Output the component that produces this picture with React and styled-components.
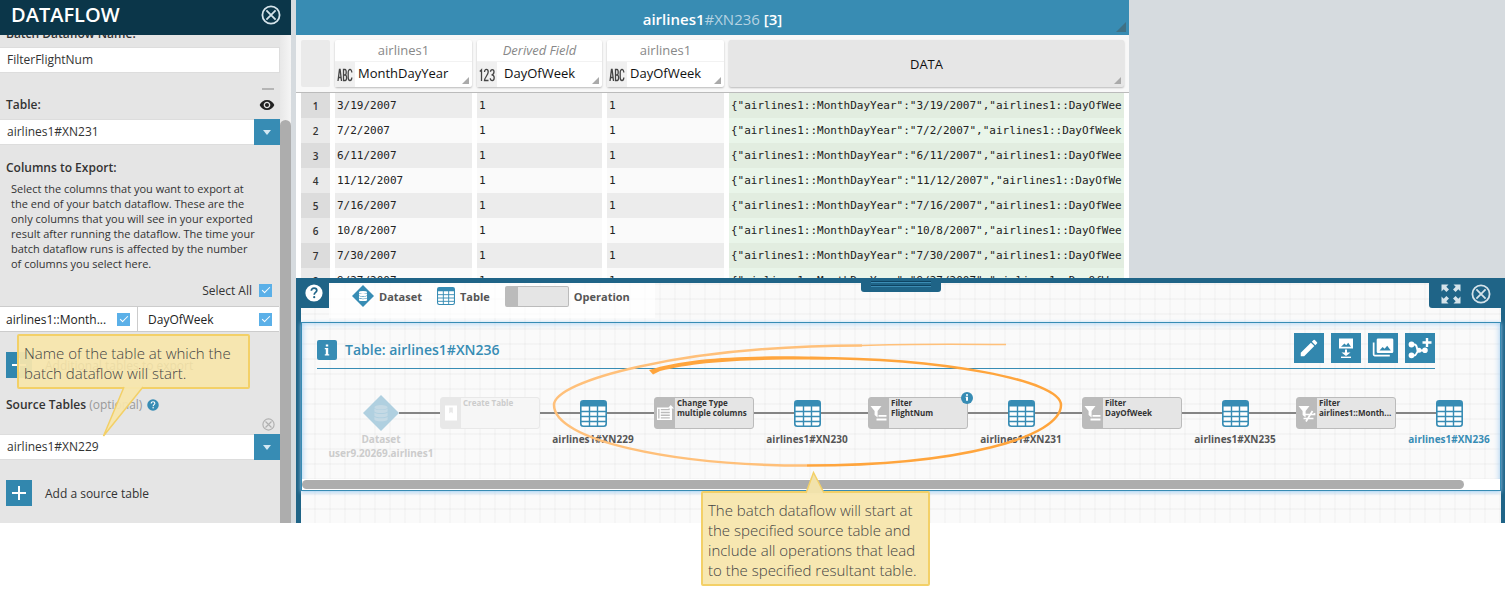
import React from "react";
import styled, { createGlobalStyle } from "styled-components";
import { MdEdit, MdVisibility } from "react-icons/md";

const color = {
  navy: "#0b3649",
  blue: "#378cb4",
  deep: "#1f6487",
  side: "#e5e5e5",
  text: "#333",
  muted: "#aaa",
  check: "#5bb0e8",
};

const GlobalStyle = createGlobalStyle`
  *, *::before, *::after { box-sizing: border-box; }
  body { margin: 0; background: #fff; color: ${color.text}; font-family: "Open Sans", sans-serif; font-size: 13px; }
  button, input, select { font: inherit; color: inherit; margin: 0; }
  button { border: 0; padding: 0; cursor: pointer; }
  svg { display: block; flex: none; }
`;

const Page = styled.div`
  position: relative;
  min-height: 100vh;
`;

const Workspace = styled.div`
  display: flex;
  background: #d6dbdf;
`;

/* ---------- sidebar ---------- */

const Sidebar = styled.aside`
  flex: none;
  width: 291px;
  margin-right: 5px;
  display: flex;
  flex-direction: column;
  background: ${color.side};
`;

const SideHeader = styled.header`
  display: flex;
  align-items: center;
  justify-content: space-between;
  height: 35px;
  padding: 0 10px 5px 11px;
  background: ${color.navy};
  color: #fff;
`;

const SideTitle = styled.h1`
  margin: 0;
  font-size: 20px;
  line-height: 30px;
  font-weight: 600;
`;

const IconButton = styled.button`
  display: flex;
  align-items: center;
  justify-content: center;
  background: none;
  color: ${(p) => p.$color || "#d5e3ea"};
`;

const SideBody = styled.div`
  flex: 1;
  display: flex;
  overflow: hidden;
`;

const SideForm = styled.form`
  flex: 1;
  min-width: 0;
  display: flex;
  flex-direction: column;
  margin-top: -11px;
`;

const SideScroll = styled.div`
  width: 11px;
  padding-top: 85px;
  display: flex;
  background: linear-gradient(90deg, #e8e8e8, #f5f5f5);
`;

const SideThumb = styled.div`
  flex: 1;
  border-radius: 6px 6px 0 0;
  background: #adadad;
`;

const Label = styled.label`
  font-size: 12px;
  line-height: 20px;
  font-weight: 600;
  padding-left: 6px;
`;

const FieldHead = styled.div`
  display: flex;
  align-items: center;
  justify-content: space-between;
  height: 20px;
  padding-right: 5px;
  margin-top: 5px;
`;

const TextBox = styled.input`
  width: 280px;
  height: 26px;
  margin-top: 3px;
  padding: 0 7px 2px;
  border: 1px solid #ddd;
  border-left: 0;
  background: #fff;
  font-size: 12px;
  font-weight: 500;
`;

const Collapse = styled.button`
  align-self: flex-end;
  width: 12px;
  height: 2px;
  margin: 15px 6px 0 0;
  background: #b5b5b5;
`;

const SelectWrap = styled.div`
  display: flex;
  height: 26px;
  position: relative;
  margin-top: ${(p) => p.$top || 0}px;
`;

const Select = styled.select`
  flex: 1;
  appearance: none;
  padding: 0 34px 2px 7px;
  border: 1px solid #ddd;
  border-width: 1px 0;
  border-radius: 0;
  background: #fff;
  font-size: 12px;
  font-weight: 500;
`;

const SelectArrow = styled.span`
  position: absolute;
  right: 0;
  top: 0;
  bottom: 0;
  width: 26px;
  display: flex;
  align-items: center;
  justify-content: center;
  background: ${color.blue};
  pointer-events: none;
`;

const SectionTitle = styled.h2`
  margin: ${(p) => p.$top}px 0 0;
  padding-left: 6px;
  display: flex;
  align-items: center;
  gap: 5px;
  font-size: 12px;
  line-height: 20px;
  font-weight: 600;
`;

const Optional = styled.span`
  font-weight: 500;
  color: #999;
`;

const Hint = styled.p`
  margin: 3px 0 0;
  padding: 0 8px 0 11px;
  font-size: 11px;
  line-height: 15px;
  font-weight: 500;
`;

const SelectAll = styled.label`
  display: flex;
  align-items: center;
  justify-content: flex-end;
  gap: 7px;
  height: 20px;
  margin-top: 9px;
  padding-right: 8px;
  font-size: 12px;
  font-weight: 500;
`;

const Check = styled.input`
  appearance: none;
  flex: none;
  width: 13px;
  height: 13px;
  background: ${color.check};
  display: grid;
  place-items: center;
  &:checked::before {
    content: "";
    width: 8px;
    height: 4px;
    margin-top: -2px;
    border: solid #fff;
    border-width: 0 0 1px 1px;
    transform: rotate(-45deg);
  }
`;

const ColumnRow = styled.div`
  display: grid;
  grid-template-columns: 137px 1fr;
  gap: 1px;
  height: 26px;
  margin-top: 6px;
  margin-right: 1px;
  border: solid #ccc;
  border-width: 1px 0;
  background: #ccc;
`;

const ColumnPick = styled.label`
  display: flex;
  align-items: center;
  justify-content: space-between;
  padding: 0 7px 0 ${(p) => p.$indent}px;
  background: #fff;
  color: #222;
  font-size: 12px;
  font-weight: 500;
`;

const AddRow = styled.div`
  display: flex;
  align-items: center;
  gap: 13px;
  height: 26px;
  margin-top: ${(p) => p.$top}px;
  margin-bottom: ${(p) => p.$bottom || 0}px;
  padding-left: 6px;
  font-size: 12px;
  font-weight: 500;
`;

const SquareButton = styled.button`
  display: flex;
  align-items: center;
  justify-content: center;
  width: ${(p) => p.$size}px;
  height: ${(p) => p.$size}px;
  background: #3287ae;
  color: #fff;
`;

const ClearRow = styled.div`
  display: flex;
  justify-content: flex-end;
  height: 14px;
  margin-top: 2px;
  padding-right: 5px;
`;

/* ---------- worksheet ---------- */

const Main = styled.main`
  flex: 1;
  min-width: 0;
  display: flex;
  flex-direction: column;
`;

const Sheet = styled.section`
  align-self: flex-start;
  height: 278px;
  overflow: hidden;
  background: #fff;
`;

const SheetHeader = styled.header`
  position: relative;
  height: 35px;
  display: flex;
  align-items: center;
  justify-content: center;
  padding-top: 2px;
  background: #388cb3;
  color: #fff;
  font-size: 15px;
  font-weight: 600;
`;

const SheetId = styled.span`
  font-weight: 400;
  color: #b5d3e2;
`;

const Corner = styled.i`
  position: absolute;
  right: 3px;
  bottom: 3px;
  width: ${(p) => p.$size}px;
  height: ${(p) => p.$size}px;
  clip-path: polygon(100% 0, 100% 100%, 0 100%);
  background: ${(p) => p.$fill};
`;

const Grid = styled.table`
  width: 833px;
  table-layout: fixed;
  border-spacing: 5px 0;
  background: linear-gradient(#f8f8f8 57px, #bbb 57px, #bbb 58px, #fff 58px);
`;

const HeadCell = styled.th`
  height: 58px;
  width: ${(p) => p.$width}px;
  padding: 0;
  padding-bottom: 1px;
  font-weight: 400;
`;

const HeadBox = styled.div`
  position: relative;
  height: 47px;
  display: flex;
  flex-direction: column;
  justify-content: ${(p) => (p.$center ? "center" : "flex-start")};
  background: ${(p) => p.$fill || "#fff"};
  border-radius: 2px;
  box-shadow: ${(p) => (p.$flat ? "none" : "0 1px 2px rgba(0,0,0,.25)")};
  color: #111;
  font-size: 13px;
  font-weight: 500;
`;

const Prefix = styled.span`
  height: 21px;
  line-height: 20px;
  color: #888;
  font-size: 13px;
  font-style: ${(p) => (p.$derived ? "italic" : "normal")};
`;

const FieldName = styled.span`
  display: flex;
  align-items: center;
  height: 26px;
  border-top: 1px solid #f2f2f2;
`;

const TypeBadge = styled.span`
  width: 20px;
  align-self: stretch;
  display: flex;
  align-items: center;
  justify-content: center;
  background: #f0f0f0;
`;

const NameText = styled.span`
  padding-left: ${(p) => p.$pad}px;
  padding-bottom: 4px;
`;

const BodyRow = styled.tr`
  height: 25px;
  background: ${(p) => (p.$odd ? "#ececec" : "#fafafa")};
`;

const Cell = styled.td`
  height: 25px;
  padding: 0 2px;
  overflow: hidden;
  white-space: nowrap;
  font-family: "DejaVu Sans Mono", monospace;
  font-size: 11px;
  line-height: 25px;
  color: #222;
`;

const JsonCell = styled(Cell)`
  background: ${(p) => (p.$odd ? "#e2ede0" : "#e9f5e9")};
`;

const JsonText = styled.div`
  overflow: hidden;
`;

const RowNumber = styled.th`
  padding: 0;
  background: ${(p) => (p.$odd ? "#dcdcdc" : "#eaeaea")};
  font-size: 10px;
  font-weight: 600;
`;

/* ---------- dataflow panel ---------- */

const Panel = styled.section`
  position: relative;
  flex: 1;
  border: 5px solid ${color.deep};
  border-right-width: 4px;
  border-bottom: 0;
  padding-bottom: 32px;
  background:
    repeating-linear-gradient(0deg, transparent 0 13px, rgba(0,0,0,.025) 13px 15px),
    repeating-linear-gradient(90deg, transparent 0 13px, rgba(0,0,0,.02) 13px 15px),
    #fafafa;
`;

const Handle = styled.div`
  position: absolute;
  top: -5px;
  left: 560px;
  width: 80px;
  height: 14px;
  padding: 3px 10px;
  border-radius: 0 0 3px 3px;
  background: ${color.deep};
`;

const HandleGrip = styled.div`
  height: 6px;
  background: repeating-linear-gradient(#0e4463 0 1px, #3b8cb4 1px 2px, transparent 2px 4px);
`;

const PanelTop = styled.div`
  display: flex;
  justify-content: space-between;
  align-items: flex-start;
  height: 39px;
`;

const HelpTab = styled.div`
  width: 28px;
  height: 25px;
  padding: 1px 0 0 4px;
  background: ${color.deep};
`;

const Legend = styled.ul`
  list-style: none;
  margin: 0 auto 0 0;
  padding: 0 25px 9px 23px;
  display: flex;
  align-items: center;
  gap: 15px;
  height: 35px;
  background: rgba(255, 255, 255, .7);
  font-size: 11px;
  font-weight: 700;
  color: #555;
`;

const LegendItem = styled.li`
  display: flex;
  align-items: center;
  gap: 5px;
`;

const OpSwatch = styled.span`
  width: 64px;
  height: 21px;
  border: 1px solid #bbb;
  border-left: 13px solid #bbb;
  border-radius: 2px;
  background: #e5e5e5;
`;

const WindowTab = styled.div`
  display: flex;
  align-items: center;
  gap: 10px;
  width: 72px;
  height: 25px;
  padding: 0 6px 3px 12px;
  border-radius: 0 0 0 3px;
  background: ${color.deep};
`;

const Flow = styled.article`
  display: flex;
  flex-direction: column;
  height: 169px;
  border: 1px solid ${color.blue};
  box-shadow: inset 0 0 6px #9ccbf2, 0 1px 4px #9ccbf2;
  overflow: hidden;
`;

const FlowHeader = styled.header`
  display: flex;
  align-items: center;
  gap: 8px;
  height: 46px;
  margin: 0 65px 0 15px;
  padding-top: 8px;
  border-bottom: 1px solid ${color.blue};
`;

const InfoBox = styled.span`
  width: 20px;
  height: 20px;
  display: flex;
  align-items: center;
  justify-content: center;
  border-radius: 2px;
  background: ${color.blue};
`;

const FlowTitle = styled.h2`
  margin: 0 auto 0 0;
  font-size: 14px;
  font-weight: 600;
  color: ${color.blue};
`;

const Tools = styled.div`
  display: flex;
  gap: 7px;
  padding-bottom: 4px;
`;

const Chain = styled.div`
  display: flex;
  align-items: center;
  height: 88px;
  padding-left: 61px;
`;

const Line = styled.span`
  flex: none;
  width: ${(p) => p.$width}px;
  height: 2px;
  background: #858585;
`;

const Node = styled.div`
  position: relative;
  flex: none;
  width: ${(p) => p.$width}px;
  display: flex;
  justify-content: center;
`;

const NodeLabel = styled.span`
  position: absolute;
  top: ${(p) => p.$top}px;
  width: 120px;
  text-align: center;
  font-size: 10px;
  line-height: 14px;
  font-weight: 700;
  color: ${(p) => p.$color || "#555"};
`;

const OpNode = styled.div`
  position: relative;
  flex: none;
  display: flex;
  width: 100px;
  height: 32px;
  border: 1px solid #bbb;
  border-radius: 3px;
  background: #e5e5e5;
  color: ${(p) => (p.$faded ? "#ccc" : "#333")};
  ${(p) => p.$faded && "background: #f6f6f6; border-color: #e8e8e8;"}
`;

const OpIcon = styled.span`
  flex: none;
  width: 20px;
  display: flex;
  align-items: center;
  justify-content: center;
  background: ${(p) => (p.$faded ? "#e8e8e8" : "#bbb")};
`;

const OpText = styled.span`
  padding-left: 2px;
  font-size: 8px;
  line-height: 10px;
  font-weight: 700;
  white-space: pre-line;
`;

const InfoDot = styled.span`
  position: absolute;
  top: -6px;
  right: -6px;
`;

const FlowScroll = styled.div`
  height: 11px;
  margin-top: auto;
  padding: 1px 36px 1px 0;
  background: #fff;
`;

const FlowThumb = styled.div`
  height: 9px;
  border-radius: 5px;
  background: #adadad;
`;

/* ---------- annotations ---------- */

const Overlay = styled.svg`
  position: absolute;
  left: ${(p) => p.$x}px;
  top: ${(p) => p.$y}px;
  pointer-events: none;
`;

const Callout = styled.aside`
  position: absolute;
  left: ${(p) => p.$x}px;
  top: ${(p) => p.$y}px;
  width: ${(p) => p.$width}px;
  padding: 7px 5px 4px;
  border: 2px solid #f3d067;
  border-radius: 2px;
  background: rgba(246, 229, 172, .94);
  background-clip: padding-box;
  font-size: 15px;
  line-height: 20px;
  font-weight: 300;
  white-space: nowrap;
  color: #444;
`;

/* ---------- icons ---------- */

const CircleX = ({ size = 20 }) => (
  <svg width={size} height={size} viewBox="0 0 20 20" fill="none" stroke="currentColor" strokeWidth="1.8">
    <circle cx="10" cy="10" r="8.6" />
    <path d="M5.4 5.4l9.2 9.2M14.6 5.4l-9.2 9.2" />
  </svg>
);

const Plus = () => (
  <svg width="16" height="16" viewBox="0 0 16 16" stroke="#fff" strokeWidth="2">
    <path d="M8 1v14M1 8h14" />
  </svg>
);

const Help = ({ size, bg, fg }) => (
  <svg width={size} height={size} viewBox="0 0 18 18" fill="none">
    <circle cx="9" cy="9" r="8.6" fill={bg} />
    <path d="M6.3 6.8c0-1.7 1.2-2.7 2.8-2.7s2.7 1 2.7 2.4c0 1.9-2.6 2-2.6 4.2" stroke={fg} strokeWidth="1.7" />
    <circle cx="9.2" cy="13.2" r="1.1" fill={fg} />
  </svg>
);

const InfoGlyph = () => (
  <svg width="6" height="12" viewBox="0 0 6 12" fill="#fff">
    <path d="M1.800.5h2.400v2H1.800zM.8 4h3.400v6.300h1v1.200H.8v-1.200h1V5.200h-1z" />
  </svg>
);

const TableIcon = ({ size = 27 }) => (
  <svg width={size} height={size} viewBox="0 0 27 27">
    <rect x=".8" y=".8" width="25.4" height="25.4" rx="2.5" fill="#fff" stroke="#378cb4" strokeWidth="1.6" />
    <path d="M1 3a2 2 0 012-2h21a2 2 0 012 2v3.500H1z" fill="#378cb4" />
    <path d="M9.500 6v20M17.500 6v20M1 11.500h25M1 16.500h25M1 21.500h25" stroke="#378cb4" strokeWidth="1.400" />
  </svg>
);

const DatasetIcon = ({ size, faded }) => (
  <svg width={size} height={size} viewBox="0 0 36 36">
    <path d="M18 0l18 18-18 18L0 18z" fill={faded ? "#b0d0e0" : "#378cb4"} />
    <g fill={faded ? "#c5dae5" : "#fff"}>
      <ellipse cx="18" cy="12.300" rx="6.600" ry="2.300" />
      <path d="M11.400 13.400c2 2 11.200 2 13.200 0v3.200c-2 2-11.200 2-13.200 0z" />
      <path d="M11.400 17.600c2 2 11.200 2 13.200 0v3.200c-2 2-11.200 2-13.200 0z" />
      <path d="M11.400 21.800c2 2 11.200 2 13.200 0v3c-2 2-11.200 2-13.200 0z" />
    </g>
  </svg>
);

const TypeIcon = ({ kind }) => (
  <svg width="16" height="14" viewBox="0 0 16 14" fill="none" stroke="#444" strokeWidth="1.300">
    {kind === "ABC" ? (
      <path d="M1 13L2.500 1.500h.6L4.500 13M1.600 9.500h2.400M6.500 1.500v11h1.700c1.800 0 1.800-5.500 0-5.500H6.500h1.500c1.600 0 1.600-5.500 0-5.500zM14.800 4.500c0-4-3.600-4-3.600 0v5c0 4 3.600 4 3.600 0" />
    ) : (
      <path d="M.8 3.500l1.700-1.700V13M5.500 4c0-3.500 3.700-3.500 3.700 0 0 3-3.700 5.500-3.700 8.500h4M11.500 3.800c0-3 3.500-3 3.500 0 0 2-1 3-2.500 3 1.700 0 2.700 1 2.700 3 0 3.600-3.900 3.600-3.900.4" />
    )}
  </svg>
);

const ExpandIcon = () => (
  <svg width="20" height="20" viewBox="0 0 20 20" fill="#d5e3ea">
    <path id="arrow" d="M.5.5h7L5.300 2.700 8 5.400 5.400 8 2.700 5.300.5 7.500z" />
    <use href="#arrow" transform="rotate(90 10 10)" />
    <use href="#arrow" transform="rotate(180 10 10)" />
    <use href="#arrow" transform="rotate(270 10 10)" />
  </svg>
);

const ExportImage = () => (
  <svg width="20" height="22" viewBox="0 0 20 22" fill="#fff">
    <path fillRule="evenodd" d="M3 1.500h14v10H3zM5 9.800h10l-2.800-4-2 2.500-1.700-1.700z" />
    <path d="M9 12.500h2v3h3.500L10 19l-4.500-3.500H9z" />
    <path d="M5 19.600h10V21H5z" />
  </svg>
);

const Images = () => (
  <svg width="22" height="20" viewBox="0 0 22 20" fill="#fff">
    <path fillRule="evenodd" d="M6 .5h14a1.300 1.300 0 011.300 1.300v12A1.300 1.300 0 0120 15H6a1.300 1.300 0 01-1.300-1.300v-12A1.300 1.300 0 016 .5zM7.500 12.500h11.300l-3.600-4.700-2.600 3-2-1.700z" />
    <path d="M.8 4.500h1.700v12.200h15.300v1.700H2.600A1.800 1.800 0 01.8 16.600z" />
  </svg>
);

const MergePlus = () => (
  <svg width="24" height="22" viewBox="0 0 24 22" fill="none" stroke="#fff" strokeWidth="2">
    <path d="M4 7.500h2.500c3.500 0 1 6 5 6h6M4 18.500h2c3.500 0 2-5 5.500-5" />
    <circle cx="3.500" cy="7.500" r="1.900" fill="#fff" />
    <circle cx="3.500" cy="18.300" r="1.900" fill="#fff" />
    <circle cx="11" cy="13.300" r="1.500" fill="#fff" />
    <circle cx="17" cy="13.300" r="1.800" fill="#fff" />
    <path d="M19 1v9M14.500 5.500h9" strokeWidth="2.400" />
  </svg>
);

const OpGlyph = ({ kind }) => (
  <svg width="18" height="18" viewBox="0 0 18 18" fill="#fff">
    {kind === "create" && (
      <path fillRule="evenodd" d="M3 1.500h12v15H3zM7.200 3.500v6L9 8l1.800 1.500v-6z" />
    )}
    {kind === "type" && (
      <>
        <path fillRule="evenodd" d="M1 3.500h11.500V5H4.800v1.300h9V5.500h2.200V16H1zM4.800 7.800v1.500h9V7.800zM4.800 10.600v1.300h9v-1.300zM4.800 13.200v1.400h9v-1.400zM2.200 5v9.600h1.300V5z" />
        <path d="M14.800 1l3.200 3.500h-2.200V7h-2V4.500h-2.200z" />
      </>
    )}
    {(kind === "filter" || kind === "filterNot") && <path d="M.5 2h11L7.600 7v6.500L4.600 11V7z" />}
    {kind === "filter" && <path d="M8.500 11h8v1.800h-8zM6.500 14.600h10v1.800h-10z" />}
    {kind === "filterNot" && (
      <path d="M7 10.500h9.500v-1.500M5.500 14.500h10M14.500 7L8 17.500" stroke="#fff" strokeWidth="1.700" fill="none" />
    )}
  </svg>
);

/* ---------- data ---------- */

const columns = [
  { prefix: "airlines1", name: "MonthDayYear", kind: "ABC", width: 137, pad: 3 },
  { prefix: "Derived Field", name: "DayOfWeek", kind: "123", width: 125, pad: 7, derived: true },
  { prefix: "airlines1", name: "DayOfWeek", kind: "ABC", width: 117, pad: 3 },
];

const dates = ["3/19/2007", "7/2/2007", "6/11/2007", "11/12/2007", "7/16/2007", "10/8/2007", "7/30/2007", "9/27/2007"];

const steps = [
  { op: "Create Table", kind: "create", faded: true, table: "airlines1#XN229" },
  { op: "Change Type\nmultiple columns", kind: "type", table: "airlines1#XN230" },
  { op: "Filter\nFlightNum", kind: "filter", info: true, table: "airlines1#XN231" },
  { op: "Filter\nDayOfWeek", kind: "filter", table: "airlines1#XN235" },
  { op: "Filter\nairlines1::Month...", kind: "filterNot", table: "airlines1#XN236", current: true },
];

function TableSelect({ id, value, top, label }) {
  return (
    <SelectWrap $top={top}>
      <Select id={id} defaultValue={value} aria-label={label}>
        <option>{value}</option>
      </Select>
      <SelectArrow>
        <svg width="8" height="5" viewBox="0 0 8 5"><path d="M0 0h8L4 5z" fill="#d3e8f3" /></svg>
      </SelectArrow>
    </SelectWrap>
  );
}

function DataflowSidebar() {
  return (
    <Sidebar>
      <SideHeader>
        <SideTitle>DATAFLOW</SideTitle>
        <IconButton aria-label="Close dataflow"><CircleX /></IconButton>
      </SideHeader>
      <SideBody>
        <SideForm>
          <Label htmlFor="flow-name">Batch Dataflow Name:</Label>
          <TextBox id="flow-name" defaultValue="FilterFlightNum" />
          <Collapse type="button" aria-label="Collapse" />
          <FieldHead>
            <Label htmlFor="result-table">Table:</Label>
            <IconButton type="button" $color="#222" aria-label="Show table"><MdVisibility size={16} /></IconButton>
          </FieldHead>
          <TableSelect id="result-table" value="airlines1#XN231" top={4} />
          <SectionTitle $top={13}>Columns to Export:</SectionTitle>
          <Hint>
            Select the columns that you want to export at<br />
            the end of your batch dataflow. These are the<br />
            only columns that you will see in your exported<br />
            result after running the dataflow. The time your<br />
            batch dataflow runs is affected by the number<br />
            of columns you select here.
          </Hint>
          <SelectAll>Select All<Check type="checkbox" defaultChecked /></SelectAll>
          <ColumnRow>
            <ColumnPick $indent={6}>airlines1::Month...<Check type="checkbox" defaultChecked /></ColumnPick>
            <ColumnPick $indent={10}>DayOfWeek<Check type="checkbox" defaultChecked /></ColumnPick>
          </ColumnRow>
          <AddRow $top={20}>
            <SquareButton type="button" $size={26} aria-label="Add export table"><Plus /></SquareButton>
            Additional tables to export
          </AddRow>
          <SectionTitle $top={17}>
            <span>Source Tables <Optional>(optional)</Optional></span>
            <Help size={12} bg={color.blue} fg="#fff" />
          </SectionTitle>
          <ClearRow>
            <IconButton type="button" $color="#b0b0b0" aria-label="Remove source table"><CircleX size={13} /></IconButton>
          </ClearRow>
          <TableSelect id="source-table" value="airlines1#XN229" top={3} label="Source table" />
          <AddRow $top={20} $bottom={17}>
            <SquareButton type="button" $size={26} aria-label="Add source"><Plus /></SquareButton>
            Add a source table
          </AddRow>
        </SideForm>
        <SideScroll><SideThumb /></SideScroll>
      </SideBody>
    </Sidebar>
  );
}

function Worksheet() {
  return (
    <Sheet>
      <SheetHeader>
        <span>airlines1<SheetId>#XN236</SheetId> [3]</span>
        <Corner $size={10} $fill="#3f7185" />
      </SheetHeader>
      <Grid>
        <thead>
          <tr>
            <HeadCell $width={29}><HeadBox $fill="#eaeaea" $flat /></HeadCell>
            {columns.map((c, i) => (
              <HeadCell key={i} $width={c.width}>
                <HeadBox>
                  <Prefix $derived={c.derived}>{c.prefix}</Prefix>
                  <FieldName>
                    <TypeBadge><TypeIcon kind={c.kind} /></TypeBadge>
                    <NameText $pad={c.pad}>{c.name}</NameText>
                  </FieldName>
                  <Corner $size={7} $fill="#aaa" />
                </HeadBox>
              </HeadCell>
            ))}
            <HeadCell $width={395}>
              <HeadBox $fill="#e6e6e6" $center>DATA<Corner $size={7} $fill="#aaa" /></HeadBox>
            </HeadCell>
          </tr>
        </thead>
        <tbody>
          {dates.map((d, i) => {
            const odd = i % 2 === 0;
            return (
              <BodyRow key={d} $odd={odd}>
                <RowNumber $odd={odd}>{i + 1}</RowNumber>
                <Cell>{d}</Cell>
                <Cell>1</Cell>
                <Cell>1</Cell>
                <JsonCell $odd={odd}>
                  <JsonText>{`{"airlines1::MonthDayYear":"${d}","airlines1::DayOfWeek":"1"}`}</JsonText>
                </JsonCell>
              </BodyRow>
            );
          })}
        </tbody>
      </Grid>
    </Sheet>
  );
}

function FlowPanel() {
  return (
    <Panel>
      <PanelTop>
        <HelpTab><Help size={18} bg="#fff" fg={color.deep} /></HelpTab>
        <Legend>
          <LegendItem><DatasetIcon size={22} />Dataset</LegendItem>
          <LegendItem><TableIcon size={18} />Table</LegendItem>
          <LegendItem><OpSwatch />Operation</LegendItem>
        </Legend>
        <WindowTab>
          <IconButton aria-label="Full screen"><ExpandIcon /></IconButton>
          <IconButton aria-label="Close panel"><CircleX /></IconButton>
        </WindowTab>
      </PanelTop>
      <Flow>
        <FlowHeader>
          <InfoBox><InfoGlyph /></InfoBox>
          <FlowTitle>Table: airlines1#XN236</FlowTitle>
          <Tools>
            <SquareButton $size={30} aria-label="Edit"><MdEdit size={22} /></SquareButton>
            <SquareButton $size={30} aria-label="Save image"><ExportImage /></SquareButton>
            <SquareButton $size={30} aria-label="Open images"><Images /></SquareButton>
            <SquareButton $size={30} aria-label="Create dataflow"><MergePlus /></SquareButton>
          </Tools>
        </FlowHeader>
        <Chain>
          <Node $width={36}>
            <DatasetIcon size={36} faded />
            <NodeLabel $top={37} $color="#ccc">Dataset<br />user9.20269.airlines1</NodeLabel>
          </Node>
          {steps.map((s, i) => (
            <React.Fragment key={s.table}>
              <Line $width={i ? 48 : 41} />
              <OpNode $faded={s.faded}>
                <OpIcon $faded={s.faded}><OpGlyph kind={s.kind} /></OpIcon>
                <OpText>{s.op}</OpText>
                {s.info && (
                  <InfoDot>
                    <svg width="12" height="12" viewBox="0 0 12 12">
                      <circle cx="6" cy="6" r="6" fill="#378cb4" />
                      <path d="M5 2.300h2v1.400H5zM4.600 4.800H7v4h-2v-3h-.4z" fill="#fff" />
                    </svg>
                  </InfoDot>
                )}
              </OpNode>
              <Line $width={40} />
              <Node $width={26}>
                <TableIcon />
                <NodeLabel $top={32} $color={s.current ? color.blue : undefined}>{s.table}</NodeLabel>
              </Node>
            </React.Fragment>
          ))}
        </Chain>
        <FlowScroll><FlowThumb /></FlowScroll>
      </Flow>
      <Handle><HandleGrip /></Handle>
    </Panel>
  );
}

export default function App() {
  return (
    <>
      <GlobalStyle />
      <Page>
        <Workspace>
          <DataflowSidebar />
          <Main>
            <Worksheet />
            <FlowPanel />
          </Main>
        </Workspace>

        <Overlay $x={550} $y={340} width="520" height="130" viewBox="550 340 520 130" fill="none">
          <path d="M1006 344.500C950 344 900 344 862 345.500" stroke="#ffc07a" strokeWidth="1.500" />
          <path d="M862 345.500C680 346 554 381 554 405C554 440 670 465.500 807 465.500" stroke="#ffc07a" strokeWidth="2.500" />
          <path d="M807 465.500C960 465.500 1061 437 1061 405C1061 380 940 358 810 358" stroke="#ffa53d" strokeWidth="2.500" />
          <path d="M649 370C690 357 750 355 830 357V359.500C750 359 700 361 660 371L653 374.500Z" fill="#ffa53d" />
        </Overlay>

        <Callout $x={17} $y={334} $width={233}>
          Name of the table at which the<br />batch dataflow will start.
        </Callout>
        <Overlay $x={100} $y={386} width="46" height="52" viewBox="100 386 46 52">
          <path d="M124 387L103.500 436L143 387" fill="#f6e5ac" fillOpacity=".94" stroke="#f3d067" strokeWidth="1.500" />
        </Overlay>

        <Callout $x={701} $y={491} $width={229}>
          The batch dataflow will start at<br />the specified source table and<br />
          include all operations that lead<br />to the specified resultant table.
        </Callout>
        <Overlay $x={802} $y={470} width="26" height="24" viewBox="802 470 26 24">
          <path d="M806 493L813.500 472.500L824 493" fill="#f1e2ab" stroke="#f3d067" strokeWidth="1.500" />
        </Overlay>
      </Page>
    </>
  );
}
